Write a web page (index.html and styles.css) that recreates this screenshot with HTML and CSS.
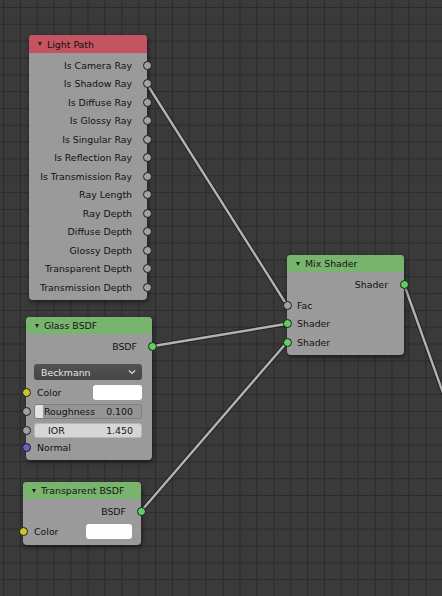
FILE: index.html
```html
<!DOCTYPE html>
<html>
<head>
    <meta charset="UTF-8" />
    <title>Node Editor</title>
    <link rel="stylesheet" href="styles.css">
</head>
<body>
<div class="editor">
    <svg class="links" width="442" height="596">
        <g class="noodle-edge">
            <line x1="146.5" y1="83.25" x2="287" y2="305.25" />
            <line x1="152" y1="346.25" x2="287" y2="323.75" />
            <line x1="141" y1="511.25" x2="287" y2="342.25" />
            <line x1="404" y1="284.25" x2="470" y2="468" />
        </g>
        <g class="noodle">
            <line x1="146.5" y1="83.25" x2="287" y2="305.25" />
            <line x1="152" y1="346.25" x2="287" y2="323.75" />
            <line x1="141" y1="511.25" x2="287" y2="342.25" />
            <line x1="404" y1="284.25" x2="470" y2="468" />
        </g>
    </svg>

    <!-- input node -->
    <div class="node light-path">
        <div class="header input"><span class="arrow"></span>Light Path</div>
        <div class="body">
            <div class="row out">Is Camera Ray<span class="socket value"></span></div>
            <div class="row out">Is Shadow Ray<span class="socket value"></span></div>
            <div class="row out">Is Diffuse Ray<span class="socket value"></span></div>
            <div class="row out">Is Glossy Ray<span class="socket value"></span></div>
            <div class="row out">Is Singular Ray<span class="socket value"></span></div>
            <div class="row out">Is Reflection Ray<span class="socket value"></span></div>
            <div class="row out">Is Transmission Ray<span class="socket value"></span></div>
            <div class="row out">Ray Length<span class="socket value"></span></div>
            <div class="row out">Ray Depth<span class="socket value"></span></div>
            <div class="row out">Diffuse Depth<span class="socket value"></span></div>
            <div class="row out">Glossy Depth<span class="socket value"></span></div>
            <div class="row out">Transparent Depth<span class="socket value"></span></div>
            <div class="row out">Transmission Depth<span class="socket value"></span></div>
        </div>
    </div>

    <!-- shader nodes -->
    <div class="node glass">
        <div class="header shader"><span class="arrow"></span>Glass BSDF</div>
        <div class="body">
            <div class="row out">BSDF<span class="socket shader-out"></span></div>
            <div class="dropdown">
                <span>Beckmann</span>
                <svg width="8" height="6" viewBox="0 0 8 6"><polyline points="1,1.5 4,4.5 7,1.5" /></svg>
            </div>
            <div class="row in color-row">
                <span class="socket color"></span>Color
                <span class="swatch"></span>
            </div>
            <div class="slider roughness">
                <span class="fill"></span>
                <span class="label">Roughness</span>
                <span class="num">0.100</span>
                <span class="socket value"></span>
            </div>
            <div class="slider ior">
                <span class="label">IOR</span>
                <span class="num">1.450</span>
                <span class="socket value"></span>
            </div>
            <div class="row in">
                <span class="socket vector"></span>Normal
            </div>
        </div>
    </div>

    <div class="node transparent">
        <div class="header shader"><span class="arrow"></span>Transparent BSDF</div>
        <div class="body">
            <div class="row out">BSDF<span class="socket shader-out"></span></div>
            <div class="row in color-row">
                <span class="socket color"></span>Color
                <span class="swatch"></span>
            </div>
        </div>
    </div>

    <div class="node mix">
        <div class="header shader"><span class="arrow"></span>Mix Shader</div>
        <div class="body">
            <div class="row out">Shader<span class="socket shader-out"></span></div>
            <div class="row in fac"><span class="socket value"></span>Fac</div>
            <div class="row in"><span class="socket shader-out"></span>Shader</div>
            <div class="row in"><span class="socket shader-out"></span>Shader</div>
        </div>
    </div>
</div>
</body>
</html>
```
FILE: styles.css
```css
body {
margin: 0;
background: #3a3a3a;
font-family: "DejaVu Sans", sans-serif;
font-size: 9.4px;
color: #121212;
}

.editor {
position: relative;
width: 442px;
height: 596px;
overflow: hidden;
background-color: #3a3a3a;
background-image: linear-gradient(to right, #2b2b2b 1px, transparent 1px),
    linear-gradient(to bottom, #2b2b2b 1px, transparent 1px);
background-size: 16.9px 16.84px;
background-position: 3px 7px;
}

.links {
position: absolute;
left: 0;
top: 0;
}
.noodle-edge line {
stroke: rgba(20, 20, 20, 0.55);
stroke-width: 4.5;
stroke-linecap: round;
}
.noodle line {
stroke: #b2b2b2;
stroke-width: 2.4;
stroke-linecap: round;
}

/* nodes sit on the canvas at their own coordinates */
.node {
position: absolute;
background: #9a9a9a;
border-radius: 4px;
box-shadow: 1px 2px 5px rgba(0, 0, 0, 0.55);
}
.light-path {
left: 29px;
top: 35px;
width: 118px;
}
.glass {
left: 26px;
top: 317px;
width: 126px;
}
.transparent {
left: 23px;
top: 482px;
width: 118px;
}
.mix {
left: 287px;
top: 255px;
width: 117px;
}

.header {
height: 17px;
display: flex;
align-items: center;
padding-left: 9px;
border-radius: 4px 4px 0 0;
}
.light-path .header {
height: 18px;
}
.header.input {
background: #c4545f;
}
.header.shader {
background: #79b46f;
}
.arrow {
width: 0;
height: 0;
margin-right: 5px;
border-left: 2.5px solid transparent;
border-right: 2.5px solid transparent;
border-top: 4px solid #1e1e1e;
}

.body {
padding: 3px 0;
}
.transparent .body {
padding-bottom: 4px;
}

.row {
position: relative;
height: 18.5px;
display: flex;
align-items: center;
}
.row.out {
justify-content: flex-end;
padding-right: 15px;
}
.mix .row.out {
padding-right: 16px;
}
.row.in {
padding-left: 11px;
}
.mix .row.in {
padding-left: 10px;
}
.mix .fac {
margin-top: 2.5px;
}

.socket {
position: absolute;
top: 50%;
width: 7px;
height: 7px;
margin-top: -4.5px;
border-radius: 50%;
border: 1px solid #1a1a1a;
}
.row.out .socket {
right: -4.5px;
}
.row.in .socket {
left: -4.5px;
}
.slider .socket {
left: -13px;
}
.socket.value {
background: #a1a1a1;
}
.socket.shader-out {
background: #5fcf5f;
}
.socket.color {
background: #c7c729;
}
.socket.vector {
background: #6363c7;
}

.dropdown {
height: 16px;
margin: 8.5px 10px 0 8px;
padding: 0 6px 0 7px;
display: flex;
align-items: center;
justify-content: space-between;
background: linear-gradient(#525252, #454545);
border-radius: 3px;
color: #e6e6e6;
}
.dropdown polyline {
fill: none;
stroke: #dcdcdc;
stroke-width: 1.2;
}

.color-row {
margin-top: 3px;
}
.transparent .color-row {
margin-top: 2px;
}
.swatch {
margin-left: auto;
margin-right: 10px;
width: 49px;
height: 15px;
background: #fff;
border-radius: 3px;
}
.transparent .swatch {
width: 46px;
margin-right: 9px;
}

.slider {
position: relative;
height: 15px;
margin: 2.5px 10px 0 8px;
display: flex;
align-items: center;
justify-content: space-between;
padding: 0 8px 0 9px;
background: #959595;
border: 1px solid #7e7e7e;
border-radius: 3px;
box-sizing: border-box;
}
.slider .fill {
position: absolute;
left: 0;
top: 0;
bottom: 0;
width: 8px;
background: #e2e2e2;
border-radius: 2px 0 0 2px;
}
.slider .label,
.slider .num {
position: relative;
}
.slider.ior {
margin-top: 4px;
padding-left: 13px;
background: #d6d6d6;
border-color: #b8b8b8;
}
```
